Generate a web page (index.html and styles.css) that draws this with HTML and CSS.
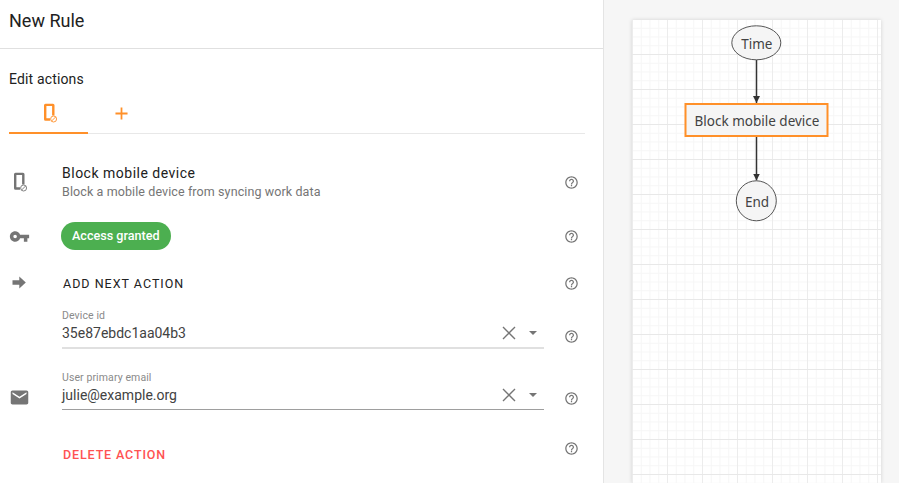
FILE: index.html
```html
<!DOCTYPE html>
<html lang="en">
<head>
<meta charset="utf-8">
<title>New Rule</title>
<link rel="stylesheet" href="styles.css">
</head>
<body>
<div class="page">
  <main class="editor">
    <header class="title-bar"><h1>New Rule</h1></header>
    <section class="content">
      <h2>Edit actions</h2>
      <div class="tabs">
        <div class="tab active">
          <svg class="i20" viewBox="0 0 20 20"><use href="#phone" class="orange"/></svg>
        </div>
        <div class="tab second-tab">
          <svg class="i14" viewBox="0 0 14 14"><path stroke="#ff9029" stroke-width="1.900" d="M7 .5v13M.5 7h13"/></svg>
        </div>
      </div>
      <div class="row row-title">
        <div class="lead"><svg class="i20" viewBox="0 0 20 20"><use href="#phone" class="gray"/></svg></div>
        <div class="body">
          <div class="name">Block mobile device</div>
          <div class="desc">Block a mobile device from syncing work data</div>
        </div>
        <svg class="help" viewBox="0 0 24 24"><use href="#q"/></svg>
      </div>
      <div class="row row-chip">
        <div class="lead"><svg class="i21" viewBox="0 0 24 24"><path fill="#757575" d="M12.650 10C11.830 7.670 9.610 6 7 6c-3.310 0-6 2.690-6 6s2.690 6 6 6c2.610 0 4.830-1.670 5.650-4H17v4h4v-4h2v-4H12.650zM7 14c-1.100 0-2-.9-2-2s.9-2 2-2 2 .9 2 2-.9 2-2 2z"/></svg></div>
        <div class="body"><span class="chip">Access granted</span></div>
        <svg class="help" viewBox="0 0 24 24"><use href="#q"/></svg>
      </div>
      <div class="row row-next">
        <div class="lead"><svg class="i20" viewBox="0 0 20 20"><path fill="#757575" d="M3.500 7.200h6.800V3.500l6.500 6-6.500 6v-3.700H3.500z"/></svg></div>
        <div class="body"><span class="btn">ADD NEXT ACTION</span></div>
        <svg class="help" viewBox="0 0 24 24"><use href="#q"/></svg>
      </div>
      <div class="row row-field">
        <div class="lead"></div>
        <div class="body field light">
          <label>Device id</label>
          <div class="value"><span>35e87ebdc1aa04b3</span>
            <svg class="x" viewBox="0 0 14 14"><path stroke="#757575" stroke-width="1.400" d="M1 1l12 12M13 1L1 13"/></svg>
            <svg class="caret" viewBox="0 0 8 4"><path fill="#757575" d="M0 0h8L4 4z"/></svg>
          </div>
        </div>
        <svg class="help" viewBox="0 0 24 24"><use href="#q"/></svg>
      </div>
      <div class="row row-field second">
        <div class="lead"><svg class="i21" viewBox="0 0 24 24"><path fill="#757575" d="M20 4H4c-1.100 0-1.990.9-1.990 2L2 18c0 1.100.9 2 2 2h16c1.100 0 2-.9 2-2V6c0-1.100-.9-2-2-2zm0 4l-8 5-8-5V6l8 5 8-5v2z"/></svg></div>
        <div class="body field dark">
          <label>User primary email</label>
          <div class="value"><span>julie@example.org</span>
            <svg class="x" viewBox="0 0 14 14"><path stroke="#757575" stroke-width="1.400" d="M1 1l12 12M13 1L1 13"/></svg>
            <svg class="caret" viewBox="0 0 8 4"><path fill="#757575" d="M0 0h8L4 4z"/></svg>
          </div>
        </div>
        <svg class="help" viewBox="0 0 24 24"><use href="#q"/></svg>
      </div>
      <div class="row row-delete">
        <div class="lead"></div>
        <div class="body"><span class="btn danger">DELETE ACTION</span></div>
        <svg class="help" viewBox="0 0 24 24"><use href="#q"/></svg>
      </div>
    </section>
  </main>
  <aside class="preview">
    <div class="canvas">
      <svg class="flow" viewBox="0 0 249 463" width="249" height="463">
        <defs><marker id="arrow" markerWidth="8" markerHeight="8" refX="7" refY="3.500" orient="auto" markerUnits="userSpaceOnUse"><path d="M0 0L7 3.500L0 7z" fill="#333"/></marker></defs>
        <path class="edge" d="M124.500 40V83" marker-end="url(#arrow)"/>
        <path class="edge" d="M124.500 117V160.500" marker-end="url(#arrow)"/>
        <ellipse class="node" cx="124.300" cy="22.800" rx="24.500" ry="17"/>
        <text class="label" x="124.800" y="28.500">Time</text>
        <rect class="task" x="53.500" y="84" width="142" height="32"/>
        <text class="label" x="125" y="106">Block mobile device</text>
        <circle class="node" cx="124.300" cy="180.800" r="20"/>
        <text class="label" x="125" y="187">End</text>
      </svg>
    </div>
  </aside>
</div>
<svg class="defs" width="0" height="0"><defs>
  <g id="q"><path fill="#757575" d="M11 18h2v-2h-2v2zm1-16C6.480 2 2 6.480 2 12s4.480 10 10 10 10-4.480 10-10S17.520 2 12 2zm0 18c-4.410 0-8-3.590-8-8s3.590-8 8-8 8 3.590 8 8-3.590 8-8 8zm0-14c-2.210 0-4 1.790-4 4h2c0-1.100.9-2 2-2s2 .9 2 2c0 2-3 1.750-3 5h2c0-2.250 3-2.500 3-5 0-2.210-1.790-4-4-4z"/></g>
  <g id="phone"><path fill="currentColor" d="M6.500 .8h7.500A1.500 1.500 0 0 1 15.500 2.300V12.500h-2.400V3.100H7.400v12.100H11V17.800H6.500A1.500 1.500 0 0 1 5 16.300V2.300A1.500 1.500 0 0 1 6.500 .8z"/><circle cx="14.600" cy="16" r="3" fill="#fff" stroke="currentColor" stroke-width=".9"/><path stroke="currentColor" stroke-width=".9" d="M12.500 18.100l4.200-4.200"/></g>
</defs></svg>
</body>
</html>
```
FILE: styles.css
```css
* { box-sizing: border-box; }
html, body { margin: 0; height: 100%; overflow: hidden; }
body { font-family: Roboto, "Liberation Sans", sans-serif; color: #212121; background: #fff; }
.defs { position: absolute; }
.orange { color: #ff9029; }
.gray { color: #757575; }
.page { display: flex; width: 899px; height: 483px; }
.editor { width: 604px; flex: none; border-right: 1px solid #e4e4e4; }
.title-bar { height: 49px; border-bottom: 1px solid #e0e0e0; padding: 11px 9px 0; }
h1 { margin: 0; font-size: 18px; font-weight: 400; line-height: 20px; letter-spacing: 0; color: #212121; }
.content { padding: 21px 18px 0 9px; }
h2 { margin: 0; font-size: 14px; font-weight: 400; line-height: 18px; letter-spacing: .15px; color: #212121; }
.tabs { display: flex; height: 41px; margin-top: 5px; border-bottom: 1px solid #e8e8e8; }
.tab { width: 79px; height: 41px; display: flex; align-items: center; justify-content: center; }
.tab.second-tab { width: 66px; padding-bottom: 1px; }
.tab.active { border-bottom: 2px solid #ff9029; padding-top: 1px; }
.i20 { width: 20px; height: 20px; display: block; }
.i21 { width: 21px; height: 21px; display: block; }
.i14 { width: 13px; height: 13px; display: block; }
.row { display: flex; width: 576px; }
.lead { width: 53px; flex: none; display: flex; align-items: center; }
.body { flex: 1; min-width: 0; }
.help { width: 15px; height: 15px; margin: 0 6.500px 0 19.500px; flex: none; }
.row-title { margin-top: 28px; height: 40px; align-items: center; }
.row-title .body { padding-top: 2px; }
.name { font-size: 14px; line-height: 17px; letter-spacing: .5px; color: #212121; margin-top: 1px; }
.desc { font-size: 12.500px; line-height: 20px; letter-spacing: .1px; color: #757575; }
.row-chip { margin-top: 20px; height: 28px; align-items: center; }
.chip { display: inline-block; height: 28px; line-height: 28px; padding: 0 11px; margin-left: -1px; border-radius: 14px; background: #4caf50; color: #fff; font-size: 12.600px; font-weight: 500; }
.row-next { margin-top: 19px; height: 28px; align-items: center; }
.row-next .body { padding-bottom: 2px; }
.btn { display: inline-block; margin-left: 1px; font-size: 12.500px; letter-spacing: 1px; color: #212121; }
.btn.danger { color: #ff5252; font-weight: 500; letter-spacing: .87px; }
.row-field { margin-top: 12px; height: 40px; align-items: flex-end; }
.row-field.second { margin-top: 21px; }
.row-field .help { margin-bottom: 5px; }
.row-field.second .help { margin-bottom: 4px; }
.row-field .lead { align-self: flex-end; padding-bottom: 2px; }
.field label { display: block; font-size: 10.500px; line-height: 13px; color: #8a8a8a; letter-spacing: .1px; }
.value { display: flex; align-items: center; height: 27px; font-size: 14px; letter-spacing: 0; color: #424242; border-bottom: 2px solid #e0e0e0; padding-bottom: 3px; }
.field.dark .value { height: 26px; border-bottom: 1px solid #9e9e9e; }
.value span { flex: 1; }
.x { width: 14px; height: 14px; margin-right: 13px; }
.caret { width: 8px; height: 4px; margin-right: 7px; }
.row-delete { margin-top: 29px; height: 28px; align-items: center; }
.row-delete .help { margin-bottom: 10px; }
.preview { flex: 1; background: #f6f6f6; padding: 20px 0 0 28px; min-width: 0; }
.canvas { width: 249px; height: 463px; background-color: #fff; box-shadow: 0 0 4px rgba(0,0,0,.15);
  background-image:
    linear-gradient(#e8e8e8 1px, transparent 1px),
    linear-gradient(90deg, #ececec 1px, transparent 1px),
    linear-gradient(#f6f6f6 1px, transparent 1px),
    linear-gradient(90deg, #f6f6f6 1px, transparent 1px);
  background-size: 35px 35px, 35px 35px, 8.750px 8.750px, 8.750px 8.750px;
  background-position: 0 -1px, 0 0, 0 -1px, 0 0;
}
.flow { display: block; }
.edge { fill: none; stroke: #333; stroke-width: 1.500px; }
.node { fill: #f5f5f5; stroke: #555; stroke-width: 1px; }
.task { fill: #f5f5f5; stroke: #ff9029; stroke-width: 2px; }
.label { font-family: "Noto Sans", "DejaVu Sans", sans-serif; font-size: 13.500px; fill: #424242; text-anchor: middle; }
```
